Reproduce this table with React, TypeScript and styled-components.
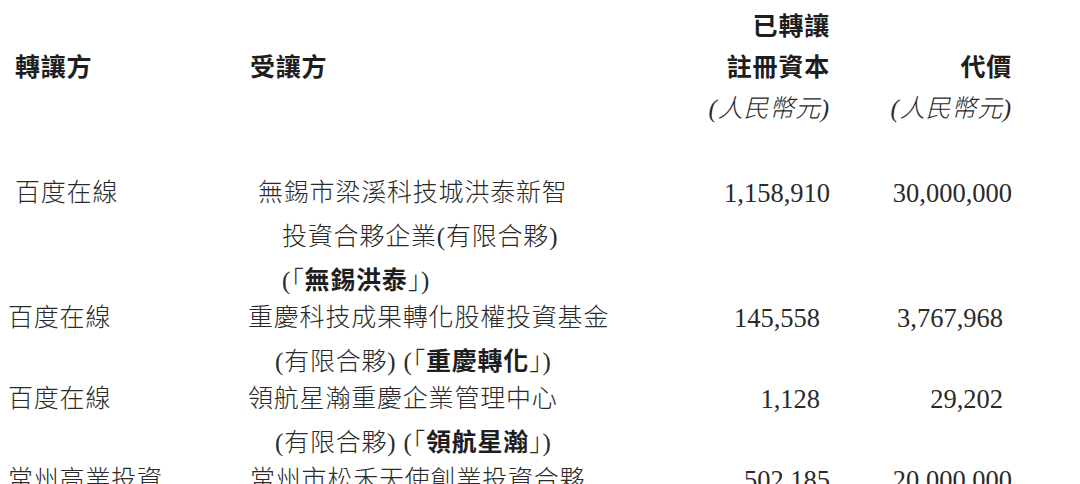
import React from "react";
import styled, { createGlobalStyle } from "styled-components";

const GlobalStyle = createGlobalStyle`
  html, body {
    margin: 0;
    padding: 0;
    background: #ffffff;
  }
  body {
    font-family: "Liberation Serif", "Noto Sans CJK TC", serif;
    color: #2a2a2a;
  }
`;

const COLS = "240px 452px 130px 182px";

const Page = styled.div`
  width: 1080px;
  height: 484px;
  box-sizing: border-box;
  padding: 6px 68px 0 8px;
  overflow: hidden;
  font-family: "Liberation Serif", "Noto Sans CJK TC", serif;
  font-size: 25px;
  font-weight: 300;
  letter-spacing: 0.8px;
  color: #2a2a2a;
`;

const HeaderGrid = styled.div`
  display: grid;
  grid-template-columns: ${COLS};
  grid-template-rows: repeat(3, 41px);
  margin-bottom: 42px;
  line-height: 41px;
`;

const HeadCell = styled.div<{ $row: number; $col: number; $right?: boolean; $indent?: number; $italic?: boolean }>`
  grid-row: ${(p) => p.$row};
  grid-column: ${(p) => p.$col};
  text-align: ${(p) => (p.$right ? "right" : "left")};
  padding-left: ${(p) => p.$indent ?? 0}px;
  font-weight: ${(p) => (p.$italic ? 300 : 700)};
  font-style: ${(p) => (p.$italic ? "italic" : "normal")};
  color: ${(p) => (p.$italic ? "#2a2a2a" : "#1e1e1e")};
  white-space: nowrap;
`;

const DataRow = styled.div`
  display: grid;
  grid-template-columns: ${COLS};
  align-items: start;
  line-height: 44px;
  & + & {
    margin-top: -7px;
  }
`;

const Party = styled.div<{ $indent: number }>`
  padding-left: ${(p) => p.$indent}px;
  white-space: nowrap;
`;

const NameCell = styled.div`
  display: flex;
  flex-direction: column;
`;

const Line = styled.span<{ $indent: number }>`
  display: block;
  padding-left: ${(p) => p.$indent}px;
  white-space: pre;
`;

const Strong = styled.b`
  font-weight: 700;
  color: #1e1e1e;
`;

const Amount = styled.div<{ $pad: number }>`
  text-align: right;
  padding-right: ${(p) => p.$pad}px;
  font-size: 26.5px;
  font-weight: 400;
  letter-spacing: 0;
  white-space: nowrap;
`;

type Row = {
  party: string;
  partyIndent: number;
  lines: { indent: number; content: React.ReactNode }[];
  capital: string;
  price: string;
  pad3: number;
  pad4: number;
};

const rows: Row[] = [
  {
    party: "百度在線",
    partyIndent: 7,
    lines: [
      { indent: 10, content: "無錫市梁溪科技城洪泰新智" },
      { indent: 34, content: "投資合夥企業(有限合夥)" },
      {
        indent: 34,
        content: (
          <>
            (「<Strong>無錫洪泰</Strong>」)
          </>
        ),
      },
    ],
    capital: "1,158,910",
    price: "30,000,000",
    pad3: 0,
    pad4: 0,
  },
  {
    party: "百度在線",
    partyIndent: 0,
    lines: [
      { indent: 0, content: "重慶科技成果轉化股權投資基金" },
      {
        indent: 27,
        content: (
          <>
            (有限合夥) (「<Strong>重慶轉化</Strong>」)
          </>
        ),
      },
    ],
    capital: "145,558",
    price: "3,767,968",
    pad3: 10,
    pad4: 9,
  },
  {
    party: "百度在線",
    partyIndent: 0,
    lines: [
      { indent: 0, content: "領航星瀚重慶企業管理中心" },
      {
        indent: 27,
        content: (
          <>
            (有限合夥) (「<Strong>領航星瀚</Strong>」)
          </>
        ),
      },
    ],
    capital: "1,128",
    price: "29,202",
    pad3: 10,
    pad4: 9,
  },
  {
    party: "常州高業投資",
    partyIndent: 0,
    lines: [{ indent: 2, content: "常州市松禾天使創業投資合夥" }],
    capital: "502,185",
    price: "20,000,000",
    pad3: 0,
    pad4: 0,
  },
];

export default function App() {
  return (
    <>
      <GlobalStyle />
      <Page>
        <HeaderGrid>
          <HeadCell $row={2} $col={1} $indent={7}>轉讓方</HeadCell>
          <HeadCell $row={2} $col={2} $indent={2}>受讓方</HeadCell>
          <HeadCell $row={1} $col={3} $right>已轉讓</HeadCell>
          <HeadCell $row={2} $col={3} $right>註冊資本</HeadCell>
          <HeadCell $row={3} $col={3} $right $italic>(人民幣元)</HeadCell>
          <HeadCell $row={2} $col={4} $right>代價</HeadCell>
          <HeadCell $row={3} $col={4} $right $italic>(人民幣元)</HeadCell>
        </HeaderGrid>
        {rows.map((r, i) => (
          <DataRow key={i}>
            <Party $indent={r.partyIndent}>{r.party}</Party>
            <NameCell>
              {r.lines.map((l, j) => (
                <Line key={j} $indent={l.indent}>
                  {l.content}
                </Line>
              ))}
            </NameCell>
            <Amount $pad={r.pad3}>{r.capital}</Amount>
            <Amount $pad={r.pad4}>{r.price}</Amount>
          </DataRow>
        ))}
      </Page>
    </>
  );
}
